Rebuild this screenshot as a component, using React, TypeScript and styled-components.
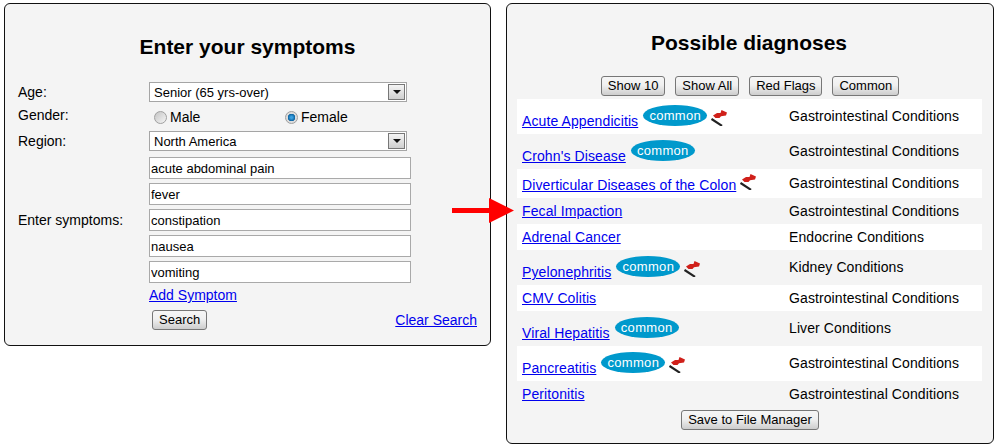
import { createGlobalStyle } from 'styled-components'
import styled from 'styled-components'

const GlobalStyle = createGlobalStyle`
  html, body {
    margin: 0;
    padding: 0;
    background: #fff;
  }
  body {
    font-family: "Liberation Sans", Arial, sans-serif;
    font-size: 14px;
    color: #000;
  }
`

const Page = styled.div`
  position: relative;
  width: 996px;
  height: 446px;
  display: flex;
  align-items: flex-start;
  gap: 15px;
  padding: 3px 0 0 4px;
  box-sizing: border-box;
`

const Panel = styled.section<{ $width: number; $height: number }>`
  width: ${p => p.$width}px;
  height: ${p => p.$height}px;
  box-sizing: border-box;
  background: #f4f4f4;
  border: 1px solid #111;
  border-radius: 6px;
`

const Title = styled.h2<{ $top: number; $bottom: number; $inset?: number }>`
  margin: ${p => p.$top}px 0 ${p => p.$bottom}px;
  padding-right: ${p => p.$inset ?? 0}px;
  font-size: 21px;
  line-height: 24px;
  font-weight: bold;
  text-align: center;
`

const Form = styled.form`
  margin: 0;
  padding: 0 13px;
`

const FieldRow = styled.div<{ $height: number }>`
  display: grid;
  grid-template-columns: 131px 1fr;
  align-items: center;
  height: ${p => p.$height}px;
`

const GenderRow = styled.div`
  display: grid;
  grid-template-columns: 131px 1fr;
  align-items: start;
  height: 29px;
  padding-top: 5px;
  box-sizing: border-box;
`

const SymptomsRow = styled.div`
  display: grid;
  grid-template-columns: 131px 1fr;
  align-items: center;
  margin-top: 6px;
`

const Label = styled.label`
  line-height: 16px;
`

const Dropdown = styled.div`
  display: flex;
  align-items: center;
  justify-content: space-between;
  width: 258px;
  height: 20px;
  box-sizing: border-box;
  background: #fff;
  border: 1px solid #a5a5a5;
  padding: 0 0 0 4px;
  font-size: 13px;
`

const DropdownButton = styled.span`
  width: 17px;
  height: 16px;
  margin-right: 1px;
  box-sizing: border-box;
  display: flex;
  align-items: center;
  justify-content: center;
  border: 1px solid #777;
  background: linear-gradient(#f4f4f4, #cfcfcf);

  &::after {
    content: '';
    border-left: 4px solid transparent;
    border-right: 4px solid transparent;
    border-top: 4px solid #111;
  }
`

const RadioGroup = styled.div`
  display: grid;
  grid-template-columns: 131px 1fr;
  padding: 2px 0 0 5px;
`

const RadioOption = styled.span`
  display: flex;
  align-items: center;
  gap: 3px;
  line-height: 16px;
`

const RadioDot = styled.span<{ $checked?: boolean }>`
  width: 13px;
  height: 13px;
  box-sizing: border-box;
  border-radius: 50%;
  border: 1px solid #a0a0a0;
  background: ${p =>
    p.$checked
      ? 'radial-gradient(circle, #3aa0e0 0 1px, #0b62a0 3.5px, #dcdcdc 4px)'
      : 'linear-gradient(135deg, #c4c4c4, #f6f6f6)'};
`

const SymptomList = styled.div`
  display: flex;
  flex-direction: column;
  gap: 4px;
`

const SymptomInput = styled.input`
  width: 262px;
  height: 22px;
  box-sizing: border-box;
  margin: 0;
  padding: 0 1px;
  background: #fff;
  border: 1px solid #a9a9a9;
  border-radius: 0;
  font-family: inherit;
  font-size: 13px;
  color: #000;
`

const TextLink = styled.a`
  color: #0000ee;
  text-decoration: underline;
  line-height: 16px;
`

const AddRow = styled.div`
  padding: 4px 0 0 131px;
  height: 27px;
  box-sizing: border-box;
`

const ActionRow = styled.div`
  display: flex;
  align-items: center;
  justify-content: space-between;
  padding-left: 134px;
  height: 20px;
`

const Button = styled.button`
  height: 20px;
  box-sizing: border-box;
  margin: 0;
  padding: 0 6px;
  border: 1px solid #777;
  border-radius: 3px;
  background: linear-gradient(#f6f6f6, #f0f0f0 45%, #cdcdcd);
  font-family: inherit;
  font-size: 13px;
  line-height: 16px;
  color: #000;
`

const FilterBar = styled.div`
  display: flex;
  justify-content: center;
  gap: 10px;
  margin-bottom: 3px;
`

const ResultList = styled.div`
  margin: 0 11px 0 10px;
`

const ResultRow = styled.div<{ $striped?: boolean }>`
  display: grid;
  grid-template-columns: 272px 1fr;
  background: ${p => (p.$striped ? '#fff' : 'transparent')};
`

const NameCell = styled.div`
  display: flex;
  align-items: flex-end;
  padding: 0 5px 5px;
`

const DiagnosisLink = styled(TextLink)`
  margin-top: 5px;
  letter-spacing: 0.1px;
`

const Badge = styled.span`
  width: 64px;
  height: 21px;
  margin: 6px 0 3px 5px;
  display: flex;
  align-items: center;
  justify-content: center;
  border-radius: 50%;
  background: #0099cc;
  color: #fff;
  font-size: 13px;
  letter-spacing: 0.3px;
`

const FlagIcon = styled.svg`
  width: 17px;
  height: 17px;
  margin: 4px 0 3px 4px;
  flex: none;
`

const CategoryCell = styled.div`
  align-self: center;
  padding-bottom: 1px;
  line-height: 16px;
  letter-spacing: 0.1px;
`

const SaveRow = styled.div`
  display: flex;
  justify-content: center;
  margin-top: 3px;
`

const Arrow = styled.svg`
  position: absolute;
  left: 452px;
  top: 198px;
`

const symptoms = ['acute abdominal pain', 'fever', 'constipation', 'nausea', 'vomiting']

const filters = ['Show 10', 'Show All', 'Red Flags', 'Common']

const diagnoses = [
  { name: 'Acute Appendicitis', category: 'Gastrointestinal Conditions', common: true, flag: true },
  { name: "Crohn's Disease", category: 'Gastrointestinal Conditions', common: true },
  { name: 'Diverticular Diseases of the Colon', category: 'Gastrointestinal Conditions', flag: true },
  { name: 'Fecal Impaction', category: 'Gastrointestinal Conditions' },
  { name: 'Adrenal Cancer', category: 'Endocrine Conditions' },
  { name: 'Pyelonephritis', category: 'Kidney Conditions', common: true, flag: true },
  { name: 'CMV Colitis', category: 'Gastrointestinal Conditions' },
  { name: 'Viral Hepatitis', category: 'Liver Conditions', common: true },
  { name: 'Pancreatitis', category: 'Gastrointestinal Conditions', common: true, flag: true },
  { name: 'Peritonitis', category: 'Gastrointestinal Conditions' },
]

function RedFlag() {
  return (
    <FlagIcon viewBox="0 0 17 17">
      <path d="M0.5 10 L11 16.8" stroke="#222" strokeWidth="2.2" fill="none" />
      <path d="M2 6.5 L6 4 L9.5 4 L10.5 1 L16 3.5 L15 6.5 L10 7.2 L8.5 9 L4.5 9 Z" fill="#d0201a" />
    </FlagIcon>
  )
}

export default function App() {
  return (
    <>
      <GlobalStyle />
      <Page>
        <Panel $width={487} $height={343}>
          <Title $top={31} $bottom={23}>Enter your symptoms</Title>
          <Form>
            <FieldRow $height={20}>
              <Label>Age:</Label>
              <Dropdown>
                Senior (65 yrs-over)
                <DropdownButton />
              </Dropdown>
            </FieldRow>
            <GenderRow>
              <Label>Gender:</Label>
              <RadioGroup>
                <RadioOption><RadioDot />Male</RadioOption>
                <RadioOption><RadioDot $checked />Female</RadioOption>
              </RadioGroup>
            </GenderRow>
            <FieldRow $height={20}>
              <Label>Region:</Label>
              <Dropdown>
                North America
                <DropdownButton />
              </Dropdown>
            </FieldRow>
            <SymptomsRow>
              <Label>Enter symptoms:</Label>
              <SymptomList>
                {symptoms.map(symptom => (
                  <SymptomInput key={symptom} value={symptom} readOnly />
                ))}
              </SymptomList>
            </SymptomsRow>
            <AddRow>
              <TextLink href="#">Add Symptom</TextLink>
            </AddRow>
            <ActionRow>
              <Button type="button">Search</Button>
              <TextLink href="#">Clear Search</TextLink>
            </ActionRow>
          </Form>
        </Panel>

        <Panel $width={488} $height={441}>
          <Title $top={27} $bottom={21} $inset={2}>Possible diagnoses</Title>
          <FilterBar>
            {filters.map(filter => (
              <Button key={filter} type="button">{filter}</Button>
            ))}
          </FilterBar>
          <ResultList>
            {diagnoses.map((item, i) => (
              <ResultRow key={item.name} $striped={i % 2 === 0}>
                <NameCell>
                  <DiagnosisLink href="#">{item.name}</DiagnosisLink>
                  {item.common && <Badge>common</Badge>}
                  {item.flag && <RedFlag />}
                </NameCell>
                <CategoryCell>{item.category}</CategoryCell>
              </ResultRow>
            ))}
          </ResultList>
          <SaveRow>
            <Button type="button">Save to File Manager</Button>
          </SaveRow>
        </Panel>

        <Arrow width="62" height="25" viewBox="0 0 62 25">
          <path d="M0 10 H37 V0 L62 12.5 L37 25 V15 H0 Z" fill="#ff0000" />
        </Arrow>
      </Page>
    </>
  )
}
